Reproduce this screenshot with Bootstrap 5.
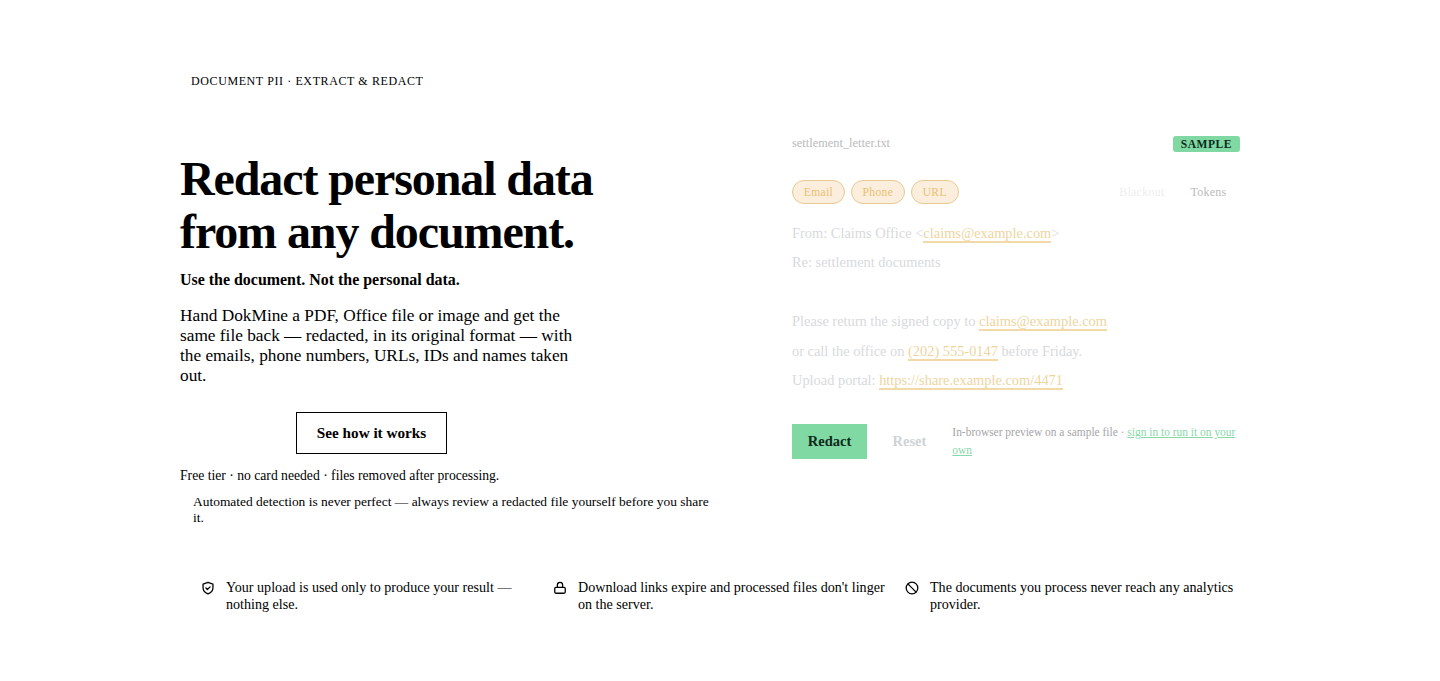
<!doctype html>
<html lang="en"><head><meta charset="utf-8"><title>DokMine</title>
<link href="https://cdn.jsdelivr.net/npm/bootstrap@5.3.0/dist/css/bootstrap.min.css" rel="stylesheet">
<style>
body{font-family:"Liberation Serif",serif;color:#000;background:#fff;height:681px;overflow:hidden}
.shell{width:1080px;margin:0 auto;padding-top:74px}
.eyebrow{font-size:12px;letter-spacing:.6px;line-height:14px;padding-left:11px;margin-bottom:64px}
.hero{display:flex}
.lhs{width:612px;flex:none}
.rhs{width:448px;flex:none;margin-top:-16px;font-size:14.4px}
.ttl{font-size:48px;font-weight:700;line-height:53px;letter-spacing:-1.1px;margin:0 0 13px}
.tag{font-size:15.95px;font-weight:700;height:18px;line-height:18px;margin:0 0 17px}
.para{font-size:17.3px;line-height:20px;width:400px;margin:0 0 26px}
.ctawrap{width:383px;display:flex;justify-content:center;margin-bottom:13px}
.cta{border:1px solid #000;border-radius:0;background:#fff;color:#000;font-weight:700;font-size:15.2px;padding:0 20px;height:42px;line-height:40px}
.free{font-size:13.65px;line-height:17px;margin:0 0 10px}
.warn{font-size:13.45px;line-height:16px;padding-left:13px;width:540px;margin:0}
.fname{font-size:12.4px;color:#bbb;line-height:14px}
.chipb{font-size:11.5px;font-weight:700;letter-spacing:.55px;background:#80d8a3;color:#0c2a1a;border-radius:3px;padding:0 8px;line-height:16px}
.tools{margin-top:28px;margin-bottom:19px;gap:6px}
.pill{font-size:11.5px;color:#eabf72;background:#fbeedd;border:1px solid #e9c994;border-radius:12px;height:24px;line-height:22px;padding:0 10.8px;letter-spacing:.35px}
.mode{font-size:12px;letter-spacing:.25px}
.mode.off{color:#eee;padding-right:20px}
.mode.on{color:#bbb;padding-right:13.5px}
.ltr{color:#d8dadc;line-height:20px}
.ltr p{margin:0 0 9.5px}
.ltr p:first-child{margin-bottom:9px}
.hit{color:#eed5a0;border-bottom:2px solid #f2d9a8;line-height:16px;display:inline-block}
.gap1{height:29.5px}
.act{margin-top:34px;display:flex;align-items:flex-start}
.go{background:#80d8a3;color:#0c2a1a;font-weight:700;border:0;border-radius:0;font-size:14.5px;flex:none;width:75px;height:35px;padding:0}
.rst{color:#cfd3d6;font-weight:700;font-size:14.5px;background:none;border:0;padding:0;margin:0 26px 0 25.500px;height:35px;flex:none}
.hint{font-size:11.45px;line-height:18px;color:#a5a5a8;margin-top:-1px}
.hint a{color:#8ad7aa}
.feats{display:grid;grid-template-columns:repeat(3,352px);margin-top:53px;padding-left:21px;font-size:14.1px;line-height:16.6px}
.feat{display:flex;gap:11px;padding-right:12px}
.feat svg{flex:none;margin-top:1.5px}
</style></head><body>
<div class="shell">
<div class="eyebrow">DOCUMENT PII · EXTRACT &amp; REDACT</div>
<div class="hero">
<div class="lhs">
<h1 class="ttl">Redact personal data<br>from any document.</h1>
<p class="tag">Use the document. Not the personal data.</p>
<p class="para">Hand DokMine a PDF, Office file or image and get the same file back — redacted, in its original format — with the emails, phone numbers, URLs, IDs and names taken out.</p>
<div class="ctawrap"><a class="btn cta" href="#">See how it works</a></div>
<p class="free">Free tier · no card needed · files removed after processing.</p>
<p class="warn">Automated detection is never perfect — always review a redacted file yourself before you share it.</p>
</div>
<div class="rhs">
<div class="d-flex justify-content-between align-items-start"><span class="fname">settlement_letter.txt</span><span class="chipb">SAMPLE</span></div>
<div class="tools d-flex align-items-center"><span class="pill">Email</span><span class="pill">Phone</span><span class="pill">URL</span><span class="ms-auto mode off">Blackout</span><span class="mode on">Tokens</span></div>
<div class="ltr">
<p>From: Claims Office &lt;<span class="hit">claims@example.com</span>&gt;</p>
<p>Re: settlement documents</p>
<div class="gap1"></div>
<p>Please return the signed copy to <span class="hit">claims@example.com</span></p>
<p>or call the office on <span class="hit">(202) 555-0147</span> before Friday.</p>
<p>Upload portal: <span class="hit">https://share.example.com/4471</span></p>
</div>
<div class="act"><button class="btn go">Redact</button><button class="btn rst">Reset</button><div class="hint">In-browser preview on a sample file · <a href="#">sign in to run it on your own</a></div></div>
</div>
</div>
<div class="feats">
<div class="feat"><svg width="14" height="14" viewBox="0 0 24 24" fill="none" stroke="#000" stroke-width="2.2" stroke-linecap="round" stroke-linejoin="round"><path d="M12 2.5l8.500 3v6c0 5-3.500 8.500-8.500 10.500-5-2-8.500-5.500-8.500-10.500v-6z"/><path d="M8.500 12l2.500 2.500 4.500-4.500"/></svg><span>Your upload is used only to produce your result — nothing else.</span></div>
<div class="feat"><svg width="14" height="14" viewBox="0 0 24 24" fill="none" stroke="#000" stroke-width="2.2" stroke-linecap="round" stroke-linejoin="round"><rect x="3" y="11" width="18" height="10" rx="2"/><path d="M7.500 11V7a4.500 4.500 0 0 1 9 0v4"/></svg><span>Download links expire and processed files don't linger on the server.</span></div>
<div class="feat"><svg width="14" height="14" viewBox="0 0 24 24" fill="none" stroke="#000" stroke-width="2.2" stroke-linecap="round"><circle cx="12" cy="12" r="10"/><path d="M5 5l14 14"/></svg><span>The documents you process never reach any analytics provider.</span></div>
</div>
</div>
<script src="https://cdn.jsdelivr.net/npm/bootstrap@5.3.0/dist/js/bootstrap.bundle.min.js"></script>
</body></html>
